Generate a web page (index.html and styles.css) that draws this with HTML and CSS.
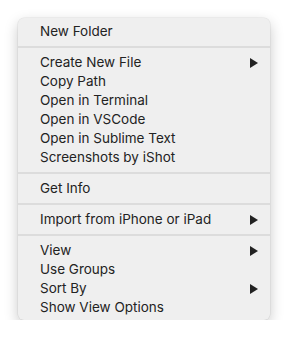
FILE: index.html
```html
<!DOCTYPE html>
<html lang="en">
<head>
  <meta charset="UTF-8" />
  <title>Context Menu</title>
  <link rel="stylesheet" href="styles.css">
</head>
<body>
  <ul class="menu" role="menu">
    <li class="item">New Folder</li>
    <li class="sep"></li>
    <li class="item sub">Create New File</li>
    <li class="item">Copy Path</li>
    <li class="item">Open in Terminal</li>
    <li class="item">Open in VSCode</li>
    <li class="item">Open in Sublime Text</li>
    <li class="item">Screenshots by iShot</li>
    <li class="sep"></li>
    <li class="item">Get Info</li>
    <li class="sep"></li>
    <li class="item sub">Import from iPhone or iPad</li>
    <li class="sep"></li>
    <li class="item sub">View</li>
    <li class="item">Use Groups</li>
    <li class="item sub">Sort By</li>
    <li class="item">Show View Options</li>
  </ul>
</body>
</html>
```

FILE: styles.css
```css
/* Reset */
* { margin: 0; padding: 0; box-sizing: border-box; }
body { background: #ffffff; font-family: Inter, 'Liberation Sans', Arial, sans-serif; color: #232323; }

/* Menu */
.menu { list-style: none; margin: 18px 0 0 18px; width: 252px; padding: 4px 0 3px; background: #efefef; border-radius: 6px; box-shadow: 0 5px 14px rgba(0,0,0,0.22), 0 0 0 0.5px rgba(0,0,0,0.08); }
.item { display: flex; align-items: center; justify-content: space-between; height: 19px; padding: 0 12px 0 22px; font-size: 13.5px; line-height: 19px; }
.item.sub::after { content: ''; width: 0; height: 0; border-left: 8px solid #222; border-top: 5px solid transparent; border-bottom: 5px solid transparent; }
.sep { height: 2px; background: #dcdcdc; margin: 5px 0; }
```
